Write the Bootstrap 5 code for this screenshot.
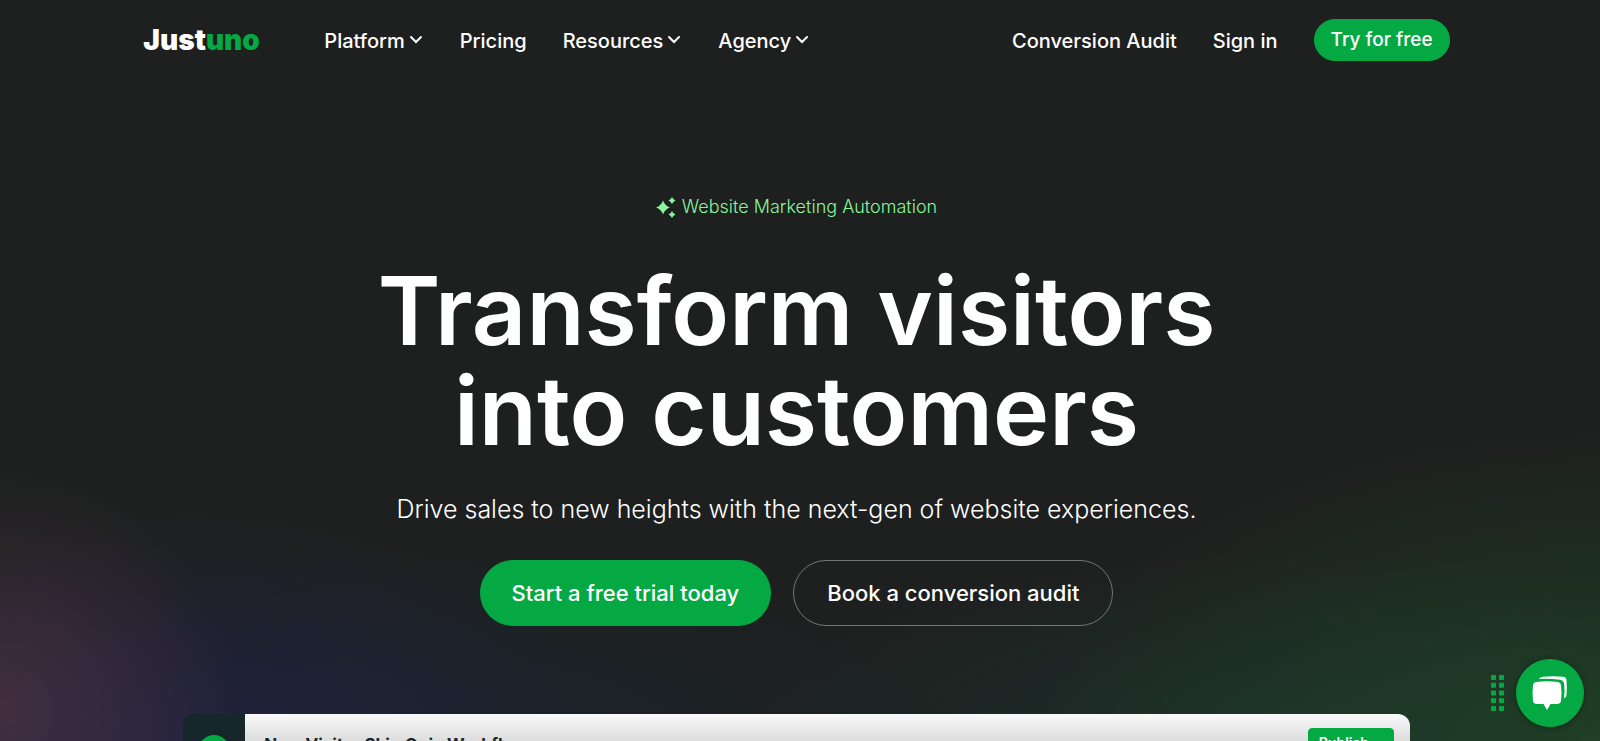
<!DOCTYPE html>
<html lang="en">
<head>
<meta charset="utf-8">
<meta name="viewport" content="width=device-width, initial-scale=1">
<title>Justuno | Website Marketing Automation</title>
<link href="https://cdn.jsdelivr.net/npm/bootstrap@5.3.0/dist/css/bootstrap.min.css" rel="stylesheet">
<style>
:root { --brand: #05a944; --ink: #1e201f; --mint: #86f79a; }
body { font-family: Inter, "Liberation Sans", sans-serif; background: var(--ink); color: #fff; }
.page-shell {
  height: 100vh;
  padding-right: 7px;
  background:
    radial-gradient(circle 240px at 0 96%, rgba(88,55,78,.6), rgba(88,55,78,0)),
    radial-gradient(ellipse 400px 260px at 12% 103%, rgba(36,34,88,.5), rgba(36,34,88,0)),
    radial-gradient(ellipse 520px 230px at 28% 104%, rgba(24,38,56,.55), rgba(24,38,56,0)),
    radial-gradient(ellipse 560px 310px at 100% 100%, rgba(32,72,38,.72), rgba(32,72,38,0)),
    radial-gradient(ellipse 560px 220px at 80% 104%, rgba(28,56,50,.7), rgba(28,56,50,0)),
    var(--ink);
}
.site-nav { padding: 18px 9% 0; }
.menu-bar { gap: 36px; }
.menu-link { display: flex; align-items: center; gap: 3px; padding-top: 2px; color: #fff; font-size: 20px; line-height: 42px; font-weight: 500; text-decoration: none; }
.menu-link svg { width: 16px; height: 10px; margin-bottom: 2px; }
.brand-word { font-weight: 900; font-size: 28px; line-height: 40px; color: #fff; text-decoration: none; width: 181px; }
.brand-word span { color: var(--brand); }
.btn-brand { --bs-btn-color: #fff; --bs-btn-bg: var(--brand); --bs-btn-border-color: var(--brand); --bs-btn-hover-color: #fff; --bs-btn-hover-bg: #048d39; --bs-btn-hover-border-color: #048d39; }
.btn-try { font-size: 19px; line-height: 40px; font-weight: 500; padding: 0 16px; }
.eyebrow-line { color: var(--mint); font-size: 18px; line-height: 28px; font-weight: 300; margin-top: 131px; gap: 5px; }
.hero-title { font-size: 95px; line-height: 100px; font-weight: 600; margin: 40px 0 0; }
.hero-sub { font-size: 25px; line-height: 36px; font-weight: 300; margin: 30px 0 0; }
.hero-actions { margin-top: 33px; gap: 22px; }
.btn-hero { font-size: 22px; line-height: 64px; font-weight: 500; padding: 0 31px; }
.btn-line { --bs-btn-color: #fff; --bs-btn-border-color: #737574; --bs-btn-hover-color: #fff; --bs-btn-hover-border-color: #fff; padding: 0 33px; }
.app-preview { width: 77%; margin: 88px auto 0; height: 600px; border-radius: 12px; }
.app-rail { width: 62px; background: #16262a; padding-top: 21px; }
.rail-mark { width: 32px; height: 32px; background: var(--brand); }
.app-bar { background: linear-gradient(#fafafa, #d9d9d9 30px); padding: 14px 16px 0 19px; }
.app-title { font-size: 17px; line-height: 34px; font-weight: 700; color: #16262a; margin: 0; }
.btn-publish { font-size: 14px; line-height: 28px; font-weight: 600; padding: 0 10px; width: 86px; border-radius: 4px; text-align: left; }
.chat-dock { right: 16px; bottom: 14px; gap: 11px; }
.chat-button { width: 68px; height: 68px; box-shadow: 0 1px 6px rgba(0,0,0,.35); }
</style>
</head>
<body>
<div class="page-shell d-flex flex-column overflow-hidden position-relative">
  <header class="site-nav d-flex align-items-center flex-shrink-0">
    <a class="brand-word flex-shrink-0" href="#">Just<span>uno</span></a>
    <nav class="menu-bar d-flex align-items-center flex-grow-1" aria-label="Main">
      <a class="menu-link" href="#">Platform<svg viewBox="0 0 16 10" fill="none" stroke="currentColor" stroke-width="2" stroke-linecap="round" aria-hidden="true"><path d="M3 2l5 5 5-5"/></svg></a>
      <a class="menu-link" href="#">Pricing</a>
      <a class="menu-link" href="#">Resources<svg viewBox="0 0 16 10" fill="none" stroke="currentColor" stroke-width="2" stroke-linecap="round" aria-hidden="true"><path d="M3 2l5 5 5-5"/></svg></a>
      <a class="menu-link" href="#">Agency<svg viewBox="0 0 16 10" fill="none" stroke="currentColor" stroke-width="2" stroke-linecap="round" aria-hidden="true"><path d="M3 2l5 5 5-5"/></svg></a>
      <a class="menu-link ms-auto" href="#">Conversion Audit</a>
      <a class="menu-link" href="#">Sign in</a>
      <button type="button" class="btn btn-brand btn-try rounded-pill">Try for free</button>
    </nav>
  </header>
  <main class="text-center flex-shrink-0">
    <p class="eyebrow-line d-flex justify-content-center align-items-center mb-0">
      <svg width="21" height="21" viewBox="0 0 21 21" fill="currentColor" aria-hidden="true"><path d="M7 3.500q1.800 5.200 7 7q-5.200 1.800-7 7q-1.800-5.200-7-7q5.200-1.800 7-7zM16 0q1 2.500 3.500 3.500q-2.500 1-3.500 3.500q-1-2.500-3.500-3.500q2.500-1 3.500-3.500zM16 14q1 2.500 3.500 3.500q-2.500 1-3.500 3.500q-1-2.500-3.500-3.500q2.500-1 3.500-3.500z"/></svg>
      Website Marketing Automation
    </p>
    <h1 class="hero-title">Transform visitors<br>into customers</h1>
    <p class="hero-sub">Drive sales to new heights with the next-gen of website experiences.</p>
    <div class="hero-actions d-flex justify-content-center">
      <button type="button" class="btn btn-brand btn-hero rounded-pill">Start a free trial today</button>
      <button type="button" class="btn btn-hero btn-line rounded-pill">Book a conversion audit</button>
    </div>
  </main>
  <section class="app-preview d-flex overflow-hidden flex-shrink-0" aria-label="Workflow editor">
    <div class="app-rail d-flex justify-content-center flex-shrink-0"><span class="rail-mark rounded-circle"></span></div>
    <div class="app-bar d-flex justify-content-between align-items-start flex-grow-1">
      <h2 class="app-title">New Visitor Skip Quiz Workflow</h2>
      <button type="button" class="btn btn-brand btn-publish">Publish</button>
    </div>
  </section>
  <div class="chat-dock position-absolute d-flex align-items-center">
    <svg width="15" height="38" viewBox="0 0 15 38" fill="#05a944" stroke="#05a944" stroke-linejoin="round" aria-hidden="true"><path d="M1.500 1.500h4v4h-4zM9.500 1.500h4v4h-4zM1.500 9.200h4v4h-4zM9.500 9.200h4v4h-4zM1.500 17h4v4h-4zM9.500 17h4v4h-4zM1.500 24.700h4v4h-4zM9.500 24.700h4v4h-4zM1.500 32.500h4v4h-4zM9.500 32.500h4v4h-4z"/></svg>
    <button type="button" class="btn btn-brand chat-button rounded-circle p-0" aria-label="Open chat">
      <svg width="36" height="36" viewBox="0 0 36 36" fill="#fff" aria-hidden="true"><path d="M4 7q10.500-1.400 22 0q2.700.4 3 3q1 8 0 16q-.4 2.700-3 3h-7.500l-3.500 6-3.500-6h-7.500q-2.700-.3-3-3q-1-8 0-16q.3-2.600 3-3z"/><path d="M7 4q1-2 4-2.300q9.500-.8 20 0q3.200.3 3.500 3.300q.7 8 0 15q-.4 3-2.500 3.500q1-8 .2-14q-.5-4.300-4.200-4.700q-10-1.300-21-.8z"/></svg>
    </button>
  </div>
</div>
<script src="https://cdn.jsdelivr.net/npm/bootstrap@5.3.0/dist/js/bootstrap.bundle.min.js"></script>
</body>
</html>
